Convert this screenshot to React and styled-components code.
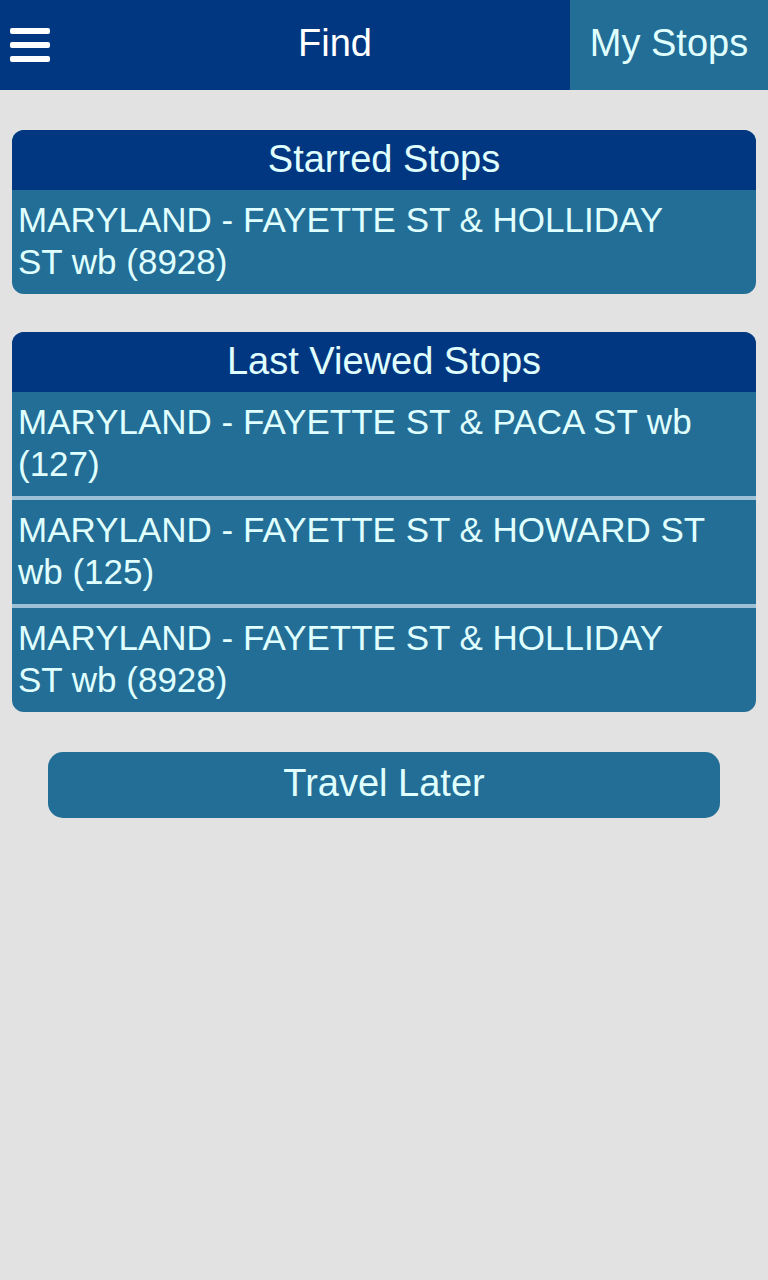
import React from 'react';
import styled, { createGlobalStyle } from 'styled-components';

const GlobalStyle = createGlobalStyle`
  * {
    box-sizing: border-box;
  }

  body {
    margin: 0;
    background: #e2e2e2;
    font-family: "Liberation Sans", Arial, sans-serif;
  }

  button {
    margin: 0;
    border: 0;
    font-family: inherit;
    cursor: pointer;
  }
`;

const Header = styled.header`
  display: flex;
  height: 90px;
  background: #003780;
`;

const MenuButton = styled.button`
  display: flex;
  align-items: center;
  width: 100px;
  padding: 0 10px;
  background: transparent;
`;

const Title = styled.h1`
  flex: 1;
  margin: 0;
  color: #fff;
  font-size: 38px;
  font-weight: normal;
  line-height: 86px;
  text-align: center;
`;

const MyStops = styled.button`
  width: 198px;
  padding: 0 0 4px;
  background: #226e96;
  color: #e0ffff;
  font-size: 38px;
`;

const Main = styled.main`
  display: flex;
  flex-direction: column;
  gap: 38px;
  padding: 40px 12px;
`;

const Panel = styled.section`
  overflow: hidden;
  border-radius: 12px;
  background: #226e96;
`;

const PanelTitle = styled.h2`
  margin: 0;
  padding-bottom: 2px;
  background: #003780;
  color: #e0ffff;
  font-size: 38px;
  font-weight: normal;
  line-height: 58px;
  text-align: center;
`;

const StopList = styled.ul`
  margin: 0;
  padding: 0;
  list-style: none;
`;

const StopItem = styled.li`
  & + & {
    border-top: 4px solid #9cc0d6;
  }
`;

const StopLink = styled.a`
  display: block;
  padding: 9px 48px 11px 6px;
  color: #e0ffff;
  font-size: 35px;
  line-height: 42px;
  text-decoration: none;
`;

const TravelButton = styled.button`
  height: 66px;
  margin: 2px 36px 0;
  padding: 0 0 4px;
  border-radius: 15px;
  background: #226e96;
  color: #e0ffff;
  font-size: 38px;
`;

const starred = ['MARYLAND - FAYETTE ST & HOLLIDAY ST wb (8928)'];

const lastViewed = [
  'MARYLAND - FAYETTE ST & PACA ST wb (127)',
  'MARYLAND - FAYETTE ST & HOWARD ST wb (125)',
  'MARYLAND - FAYETTE ST & HOLLIDAY ST wb (8928)',
];

const MenuIcon = () => (
  <svg width="40" height="34" viewBox="0 0 40 34" fill="#fff" aria-hidden="true">
    <rect width="40" height="6" rx="2" />
    <rect y="14" width="40" height="6" rx="2" />
    <rect y="28" width="40" height="6" rx="2" />
  </svg>
);

const StopPanel = ({ title, stops }) => (
  <Panel>
    <PanelTitle>{title}</PanelTitle>
    <StopList>
      {stops.map((stop) => (
        <StopItem key={stop}>
          <StopLink href="#stop">{stop}</StopLink>
        </StopItem>
      ))}
    </StopList>
  </Panel>
);

export default function App() {
  return (
    <>
      <GlobalStyle />
      <Header>
        <MenuButton type="button" aria-label="Menu">
          <MenuIcon />
        </MenuButton>
        <Title>Find</Title>
        <MyStops type="button">My Stops</MyStops>
      </Header>
      <Main>
        <StopPanel title="Starred Stops" stops={starred} />
        <StopPanel title="Last Viewed Stops" stops={lastViewed} />
        <TravelButton type="button">Travel Later</TravelButton>
      </Main>
    </>
  );
}
